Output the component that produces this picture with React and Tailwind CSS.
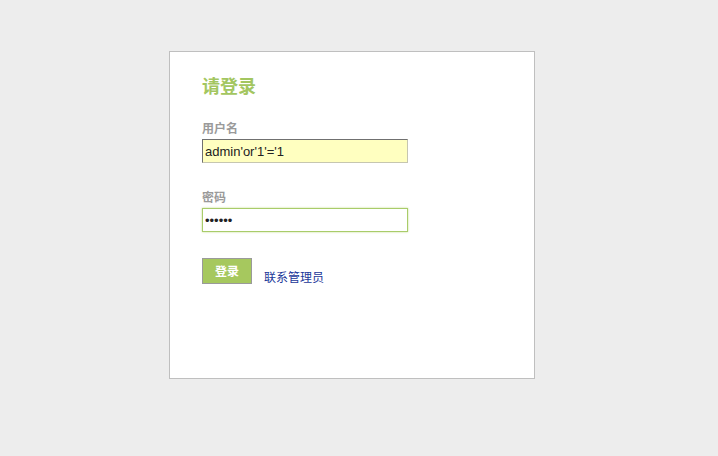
import React, { useState } from 'react';

const App = () => {
  const [username, setUsername] = useState("admin'or'1'='1");
  const [password, setPassword] = useState('123456');

  return (
    <div className="min-h-[456px] bg-[#ededed] pt-[51px] pl-[169px]" style={{ fontFamily: '"Microsoft YaHei", "Noto Sans CJK SC", sans-serif' }}>
      <div className="w-[366px] h-[328px] bg-white border border-[#bfbfbf] pl-[32px] pt-[21px]">
        <h2 className="text-[18px] leading-[24px] font-bold text-[#a3c660]">请登录</h2>
        <div className="mt-[23px]">
          <label className="block text-[12px] leading-[16px] font-bold text-[#9a9a9a]">用户名</label>
          <input
            type="text"
            value={username}
            onChange={(e) => setUsername(e.target.value)}
            className="mt-[3px] block w-[206px] h-[24px] bg-[#ffffc0] border border-[#c6c6b0] border-t-[#707070] border-l-[#707070] px-[2px] text-[13px] text-[#222] outline-none"
            style={{ fontFamily: '"Liberation Sans", Arial, sans-serif' }}
          />
        </div>
        <div className="mt-[26px]">
          <label className="block text-[12px] leading-[16px] font-bold text-[#9a9a9a]">密码</label>
          <input
            type="password"
            value={password}
            onChange={(e) => setPassword(e.target.value)}
            className="mt-[3px] block w-[206px] h-[24px] bg-white border border-[#a9cc6a] shadow-[0_0_2px_#c3dd8e] px-[2px] text-[13px] text-[#222] outline-none"
            style={{ fontFamily: '"Liberation Sans", Arial, sans-serif' }}
          />
        </div>
        <div className="mt-[26px] flex items-end gap-[12px]">
          <button className="w-[50px] h-[26px] bg-[#a6c85e] border border-[#9a9a9a] text-white text-[12px] font-bold">登录</button>
          <a href="#" className="text-[12px] leading-[16px] text-[#1a3799] mb-[-1px]">联系管理员</a>
        </div>
      </div>
    </div>
  );
};

export default App;
